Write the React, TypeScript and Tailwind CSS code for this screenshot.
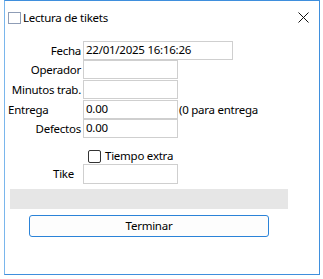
import React from "react";

const font = { fontFamily: '"Noto Sans", "Open Sans", sans-serif', letterSpacing: "-0.25px" };

function Field({ label, w, value, align = "right", note }: { label: string; w: string; value?: string; align?: "right" | "left"; note?: string }) {
  return (
    <div className="flex items-center h-[19px]">
      <div className={`w-[76px] shrink-0 text-[11.5px] leading-none text-black ${align === "right" ? "text-right" : "text-left pl-[3px]"}`}>{label}</div>
      <div className={`ml-[2px] h-[19px] border border-[#cfcfcf] bg-white text-[11.5px] leading-[15px] text-black pl-[2px] ${w}`}>{value}</div>
      {note && <div className="ml-[1px] text-[11.5px] leading-none text-black">{note}</div>}
    </div>
  );
}

export default function App() {
  return (
    <div className="w-[323px] h-[279px] bg-white relative" style={font}>
      <div className="absolute left-[4px] top-0 w-[316px] h-[275px] border border-[#3f8fdd] border-l-[#7ab6ec] bg-white flex flex-col">
        {/* Title bar */}
        <div className="flex items-center h-[32px] pl-[3px] pr-[10px]">
          <div className="w-[13px] h-[12px] border border-[#8f9db6] bg-white mt-[2px]" />
          <div className="ml-[2px] text-[11.5px] text-black mt-[1px]">Lectura de tikets</div>
          <div className="flex-1" />
          <svg width="11" height="11" viewBox="0 0 11 11" className="mt-[1px]">
            <path d="M0.5 0.5 L10.5 10.5 M10.5 0.5 L0.5 10.5" stroke="#111" strokeWidth="1" />
          </svg>
        </div>
        {/* Form */}
        <div className="flex flex-col mt-[8px]">
          <Field label="Fecha" w="w-[150px]" value="22/01/2025 16:16:26" />
          <Field label="Operador" w="w-[95px]" />
          <div className="h-[1px]" />
          <Field label="Minutos trab." w="w-[95px]" />
          <div className="h-[1px]" />
          <Field label="Entrega" w="w-[95px]" value="0.00" align="left" note="(0 para entrega" />
          <Field label="Defectos" w="w-[95px]" value="0.00" />
        </div>
        <div className="flex items-center mt-[11px] ml-[83px] h-[14px]">
          <div className="w-[13px] h-[13px] border border-[#333] rounded-[2px] bg-white" />
          <div className="ml-[4px] text-[11.5px] leading-none text-black">Tiempo extra</div>
        </div>
        <div className="flex items-center h-[20px] mt-[1px]">
          <div className="w-[69px] text-right text-[11.5px] leading-none text-black">Tike</div>
          <div className="ml-[9px] w-[95px] h-[20px] border border-[#cfcfcf] bg-white" />
        </div>
        <div className="ml-[5px] mt-[5px] w-[278px] h-[20px] bg-[#e6e6e6]" />
        <div className="ml-[24px] mt-[6px] w-[240px] h-[22px] border border-[#2b83d8] rounded-[3px] bg-[#fdfdfd] flex items-center justify-center text-[11.5px] text-black">
          Terminar
        </div>
      </div>
    </div>
  );
}
